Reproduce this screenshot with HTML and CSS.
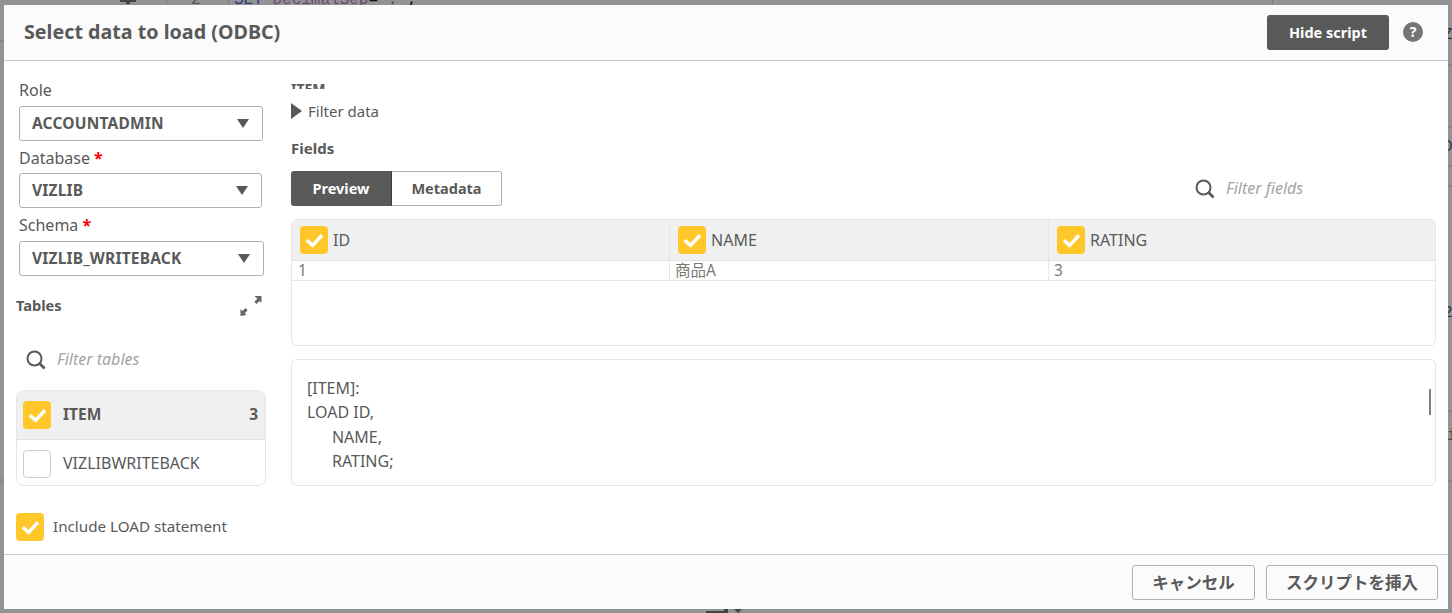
FILE: index.html
```html
<!DOCTYPE html>
<html lang="en">
<head>
<meta charset="utf-8">
<title>Select data to load (ODBC)</title>
<link rel="stylesheet" href="styles.css">
</head>
<body>
<div class="backdrop" aria-hidden="true">
  <svg class="bg-lines" width="1452" height="613">
    <path d="M166.500 0v5M228.500 0v5M1272.500 0v5M1448 65h4M1448 127h4M1448 166h4M1448 186h4M1448 411h4M1448 481h4M0 41h4M0 480h4" stroke="#7d7d7d" fill="none"/>
    <path d="M120 0h16v2h-6v2h-4v-2h-6zM706 611h18v-2h4v4h-22zM734 609h8l-4 4z" fill="#444"/>
  </svg>
  <span class="bg-line">2</span>
  <span class="bg-code"><span class="kw">SET</span> <span class="var">DecimalSep</span>= <span class="dot">.</span> ;</span>
  <span class="bg-edge e1">Z</span>
  <span class="bg-edge e2">D</span>
  <span class="bg-edge e3">2</span>
  <span class="bg-edge e4">i</span>
</div>
<svg width="0" height="0" class="defs">
  <symbol id="check" viewBox="0 0 28 28"><path d="M6.800 14.200l5.800 5.200 9.400-10.100" fill="none" stroke="#fff" stroke-width="3.500"/></symbol>
  <symbol id="search" viewBox="0 0 20 20"><circle cx="8.500" cy="8.500" r="7" fill="none" stroke="#595959" stroke-width="2"/><path d="M13.600 13.600l5 5" stroke="#595959" stroke-width="2.800" fill="none"/></symbol>
</svg>
<main class="modal">
  <header class="modal-head">
    <h1 class="title">Select data to load (ODBC)</h1>
    <button class="btn-dark">Hide script</button>
    <span class="help">?</span>
  </header>
  <div class="modal-body">
    <aside class="left">
      <label class="lbl">Role</label>
      <div class="select s1">ACCOUNTADMIN<i class="caret"></i></div>
      <label class="lbl l2">Database <b class="req">*</b></label>
      <div class="select s2">VIZLIB<i class="caret"></i></div>
      <label class="lbl l3">Schema <b class="req">*</b></label>
      <div class="select s3">VIZLIB_WRITEBACK<i class="caret"></i></div>
      <div class="tables-head">
        <strong>Tables</strong>
        <svg class="expand" width="22" height="22" viewBox="0 0 22 22"><path d="M14.500 1h7v7l-2-2-3 3-2.200-2.200 3-3zM.500 21v-7l2 2 3-3 2.200 2.200-3 3 2 1.800z" fill="#666"/></svg>
      </div>
      <div class="filter f-tables"><svg width="20" height="20"><use href="#search"/></svg><span>Filter tables</span></div>
      <ul class="tlist">
        <li class="trow on"><span class="cb"><svg width="28" height="28"><use href="#check"/></svg></span><span class="tname">ITEM</span><span class="tname tcount">3</span></li>
        <li class="trow"><span class="cb off"></span><span class="tname">VIZLIBWRITEBACK</span></li>
      </ul>
      <div class="incl"><span class="cb"><svg width="28" height="28"><use href="#check"/></svg></span><span class="incl-text">Include LOAD statement</span></div>
    </aside>
    <section class="right">
      <div class="clip"><div class="item-title">ITEM</div></div>
      <div class="filter-data"><i class="tri"></i>Filter data</div>
      <div class="fields-title">Fields</div>
      <div class="toolbar">
        <div class="tabs"><span class="tab active">Preview</span><span class="tab">Metadata</span></div>
        <div class="filter f-fields"><svg width="20" height="20"><use href="#search"/></svg><span>Filter fields</span></div>
      </div>
      <div class="grid-box">
        <div class="grow ghead">
          <div class="gc c1"><span class="cb"><svg width="28" height="28"><use href="#check"/></svg></span>ID</div>
          <div class="gc c2"><span class="cb"><svg width="28" height="28"><use href="#check"/></svg></span>NAME</div>
          <div class="gc c3"><span class="cb"><svg width="28" height="28"><use href="#check"/></svg></span>RATING</div>
        </div>
        <div class="grow gdata">
          <div class="gc c1 first">1</div>
          <div class="gc c2">商品A</div>
          <div class="gc c3">3</div>
        </div>
      </div>
      <div class="script">
        <pre class="code">[ITEM]:
LOAD ID,
      NAME,
      RATING;</pre>
        <i class="sbar"></i>
      </div>
    </section>
  </div>
  <footer class="modal-foot">
    <button class="btn b-cancel">キャンセル</button>
    <button class="btn b-insert">スクリプトを挿入</button>
  </footer>
</main>
</body>
</html>
```

FILE: styles.css
```css
* { box-sizing: border-box; }
html, body { margin: 0; height: 100%; overflow: hidden; }
body {
  background: #939393;
  font-family: "Noto Sans", "Noto Sans CJK JP", sans-serif;
  color: #595959;
  font-size: 14px;
  position: relative;
}
.defs { position: absolute; }
.backdrop { position: absolute; inset: 0; font-family: "Liberation Mono", monospace; font-size: 16px; color: #222; }
.bg-lines { position: absolute; left: 0; top: 0; }
.bg-line { position: absolute; left: 191px; top: -9px; color: #555; }
.bg-code { position: absolute; left: 234px; top: -9px; color: #111; white-space: pre; }
.kw { color: #2b3f7a; }
.var { color: #6b4a78; }
.dot { color: #2d5a2d; }
.bg-edge { position: absolute; left: 1443px; color: #333; }
.e1 { top: 26px; }
.e2 { top: 138px; }
.e3 { top: 304px; }
.e4 { top: 427px; left: 1447px; color: #4a4438; }
.modal {
  position: absolute;
  left: 4px; top: 5px; width: 1444px; height: 604px;
  background: #fff;
  display: flex; flex-direction: column;
  border-radius: 2px;
}
.modal-head {
  height: 56px; flex: none;
  display: flex; align-items: center;
  background: #fbfbfb;
  border-bottom: 1px solid #c8c8c8;
  padding: 0 25px 1px 20px;
}
.title { margin: -2px 0 0; font-size: 19.7px; font-weight: 700; flex: 1; color: #595959; }
.btn-dark {
  width: 122px; height: 35px;
  background: #595959; color: #fff;
  border: 0; border-radius: 3px;
  font: 700 14.5px "Noto Sans", sans-serif;
  margin-right: 14px;
}
.help {
  width: 20px; height: 20px; border-radius: 50%;
  background: #757575; color: #fff;
  font-weight: 700; font-size: 14px; line-height: 20px; text-align: center;
}
.modal-body { flex: 1; display: flex; min-height: 0; }
.left { width: 287px; flex: none; padding: 18px 0 0 12px; display: flex; flex-direction: column; align-items: flex-start; }
.lbl { font-size: 16px; line-height: 22px; margin-left: 3px; height: 27px; }
.l2 { height: 26px; margin-top: 6px; }
.l3 { height: 27px; margin-top: 6px; }
.req { color: #f00; font-weight: 700; }
.select {
  position: relative;
  margin-left: 3px; height: 35px;
  border: 1px solid #b0b0b0; border-radius: 3px;
  font-weight: 700; font-size: 15.5px; letter-spacing: .2px; line-height: 33px;
  padding-left: 12px;
  background: #fff;
}
.s1 { width: 244px; }
.s2 { width: 243px; }
.s3 { width: 245px; }
.caret {
  position: absolute; right: 13px; top: 12px;
  border-left: 6px solid transparent; border-right: 6px solid transparent;
  border-top: 9px solid #595959;
}
.tables-head { width: 246px; height: 22px; margin-top: 19px; display: flex; justify-content: space-between; align-items: center; font-size: 14.6px; line-height: 20px; }
.tables-head strong { font-weight: 700; margin-top: -2px; }
.expand { margin-top: -1px; }
.filter { display: flex; align-items: center; color: #a3a3a3; font-style: italic; font-size: 16px; }
.filter svg { flex: none; }
.filter span { padding-bottom: 2px; }
.f-tables { margin: 32px 0 0 10px; height: 22px; gap: 11px; line-height: 20px; }
.tlist { list-style: none; margin: 19px 0 0; padding: 0; width: 250px; height: 96px; border: 1px solid #e6e6e6; border-radius: 8px; overflow: hidden; font-size: 16px; }
.trow { display: flex; align-items: center; height: 47px; padding: 0 7px 0 6px; }
.trow.on { height: 49px; background: #f0f0f0; border-bottom: 1px solid #e0e0e0; font-weight: 700; font-size: 15.5px; line-height: 20px; padding-bottom: 1px; }
.tname { margin-left: 12px; flex: 1; padding-bottom: 2px; }
.tcount { flex: none; }
.cb { width: 28px; height: 28px; flex: none; display: block; border-radius: 4px; background: #ffc72a; }
.cb svg { display: block; }
.cb.off { background: #fff; border: 1px solid #ccc; }
.incl { display: flex; align-items: center; gap: 9px; margin-top: 27px; font-size: 15.2px; }
.incl-text { padding-bottom: 2px; }
.right { flex: 1; padding: 20px 0 0 0; min-width: 0; width: 1145px; }
.clip { height: 8px; overflow: hidden; }
.item-title { font-weight: 700; font-size: 14px; line-height: 16px; }
.filter-data { display: flex; align-items: center; height: 22px; margin-top: 11px; font-size: 15px; }
.tri { border-top: 8px solid transparent; border-bottom: 8px solid transparent; border-left: 11px solid #595959; margin-right: 6px; }
.fields-title { font-weight: 700; font-size: 15px; margin-top: 15px; line-height: 22px; height: 22px; }
.toolbar { display: flex; align-items: center; justify-content: space-between; width: 1145px; margin-top: 12px; height: 35px; }
.tabs { display: flex; height: 35px; font-size: 14.5px; }
.tab { width: 110px; border: 1px solid #b0b0b0; border-left: 0; border-radius: 0 3px 3px 0; font-weight: 700; text-align: center; line-height: 33px; }
.tab.active { width: 101px; background: #595959; color: #fff; border: 0; border-right: 1px solid #404040; border-radius: 3px 0 0 3px; line-height: 35px; }
.f-fields { width: 241px; gap: 11px; }
.grid-box { width: 1145px; height: 127px; margin-top: 13px; border: 1px solid #e6e6e6; border-radius: 6px; overflow: hidden; }
.grow { display: flex; }
.ghead { height: 41px; background: #f0f0f0; border-bottom: 1px solid #e0e0e0; font-size: 16px; }
.gdata { height: 20px; border-bottom: 1px solid #e6e6e6; color: #7a7a7a; font-size: 15.5px; }
.gc { display: flex; align-items: center; gap: 5px; border-right: 1px solid #e6e6e6; padding-left: 8px; }
.gdata .gc { padding: 0 0 2px 5px; }
.gdata .first { padding-left: 6px; }
.c1 { width: 378px; }
.c2 { width: 379px; }
.c3 { flex: 1; border-right: 0; }
.script { position: relative; width: 1145px; height: 127px; margin-top: 13px; border: 1px solid #e6e6e6; border-radius: 6px; }
.code { margin: 16px 0 0 15px; font: 16px/24.300px "Noto Sans", sans-serif; white-space: pre; }
.sbar { position: absolute; left: 1137px; top: 29px; width: 2px; height: 26px; background: #808080; }
.modal-foot {
  height: 55px; flex: none;
  background: #fbfbfb; border-top: 1px solid #c8c8c8;
  display: flex; justify-content: flex-end; align-items: center; gap: 11px;
  padding-right: 10px;
}
.btn {
  height: 35px; background: #fbfbfb;
  border: 1px solid #b0b0b0; border-radius: 3px;
  color: #595959; font: 700 16.5px "Noto Sans CJK JP", sans-serif;
}
.b-cancel { width: 123px; }
.b-insert { width: 172px; }
```
